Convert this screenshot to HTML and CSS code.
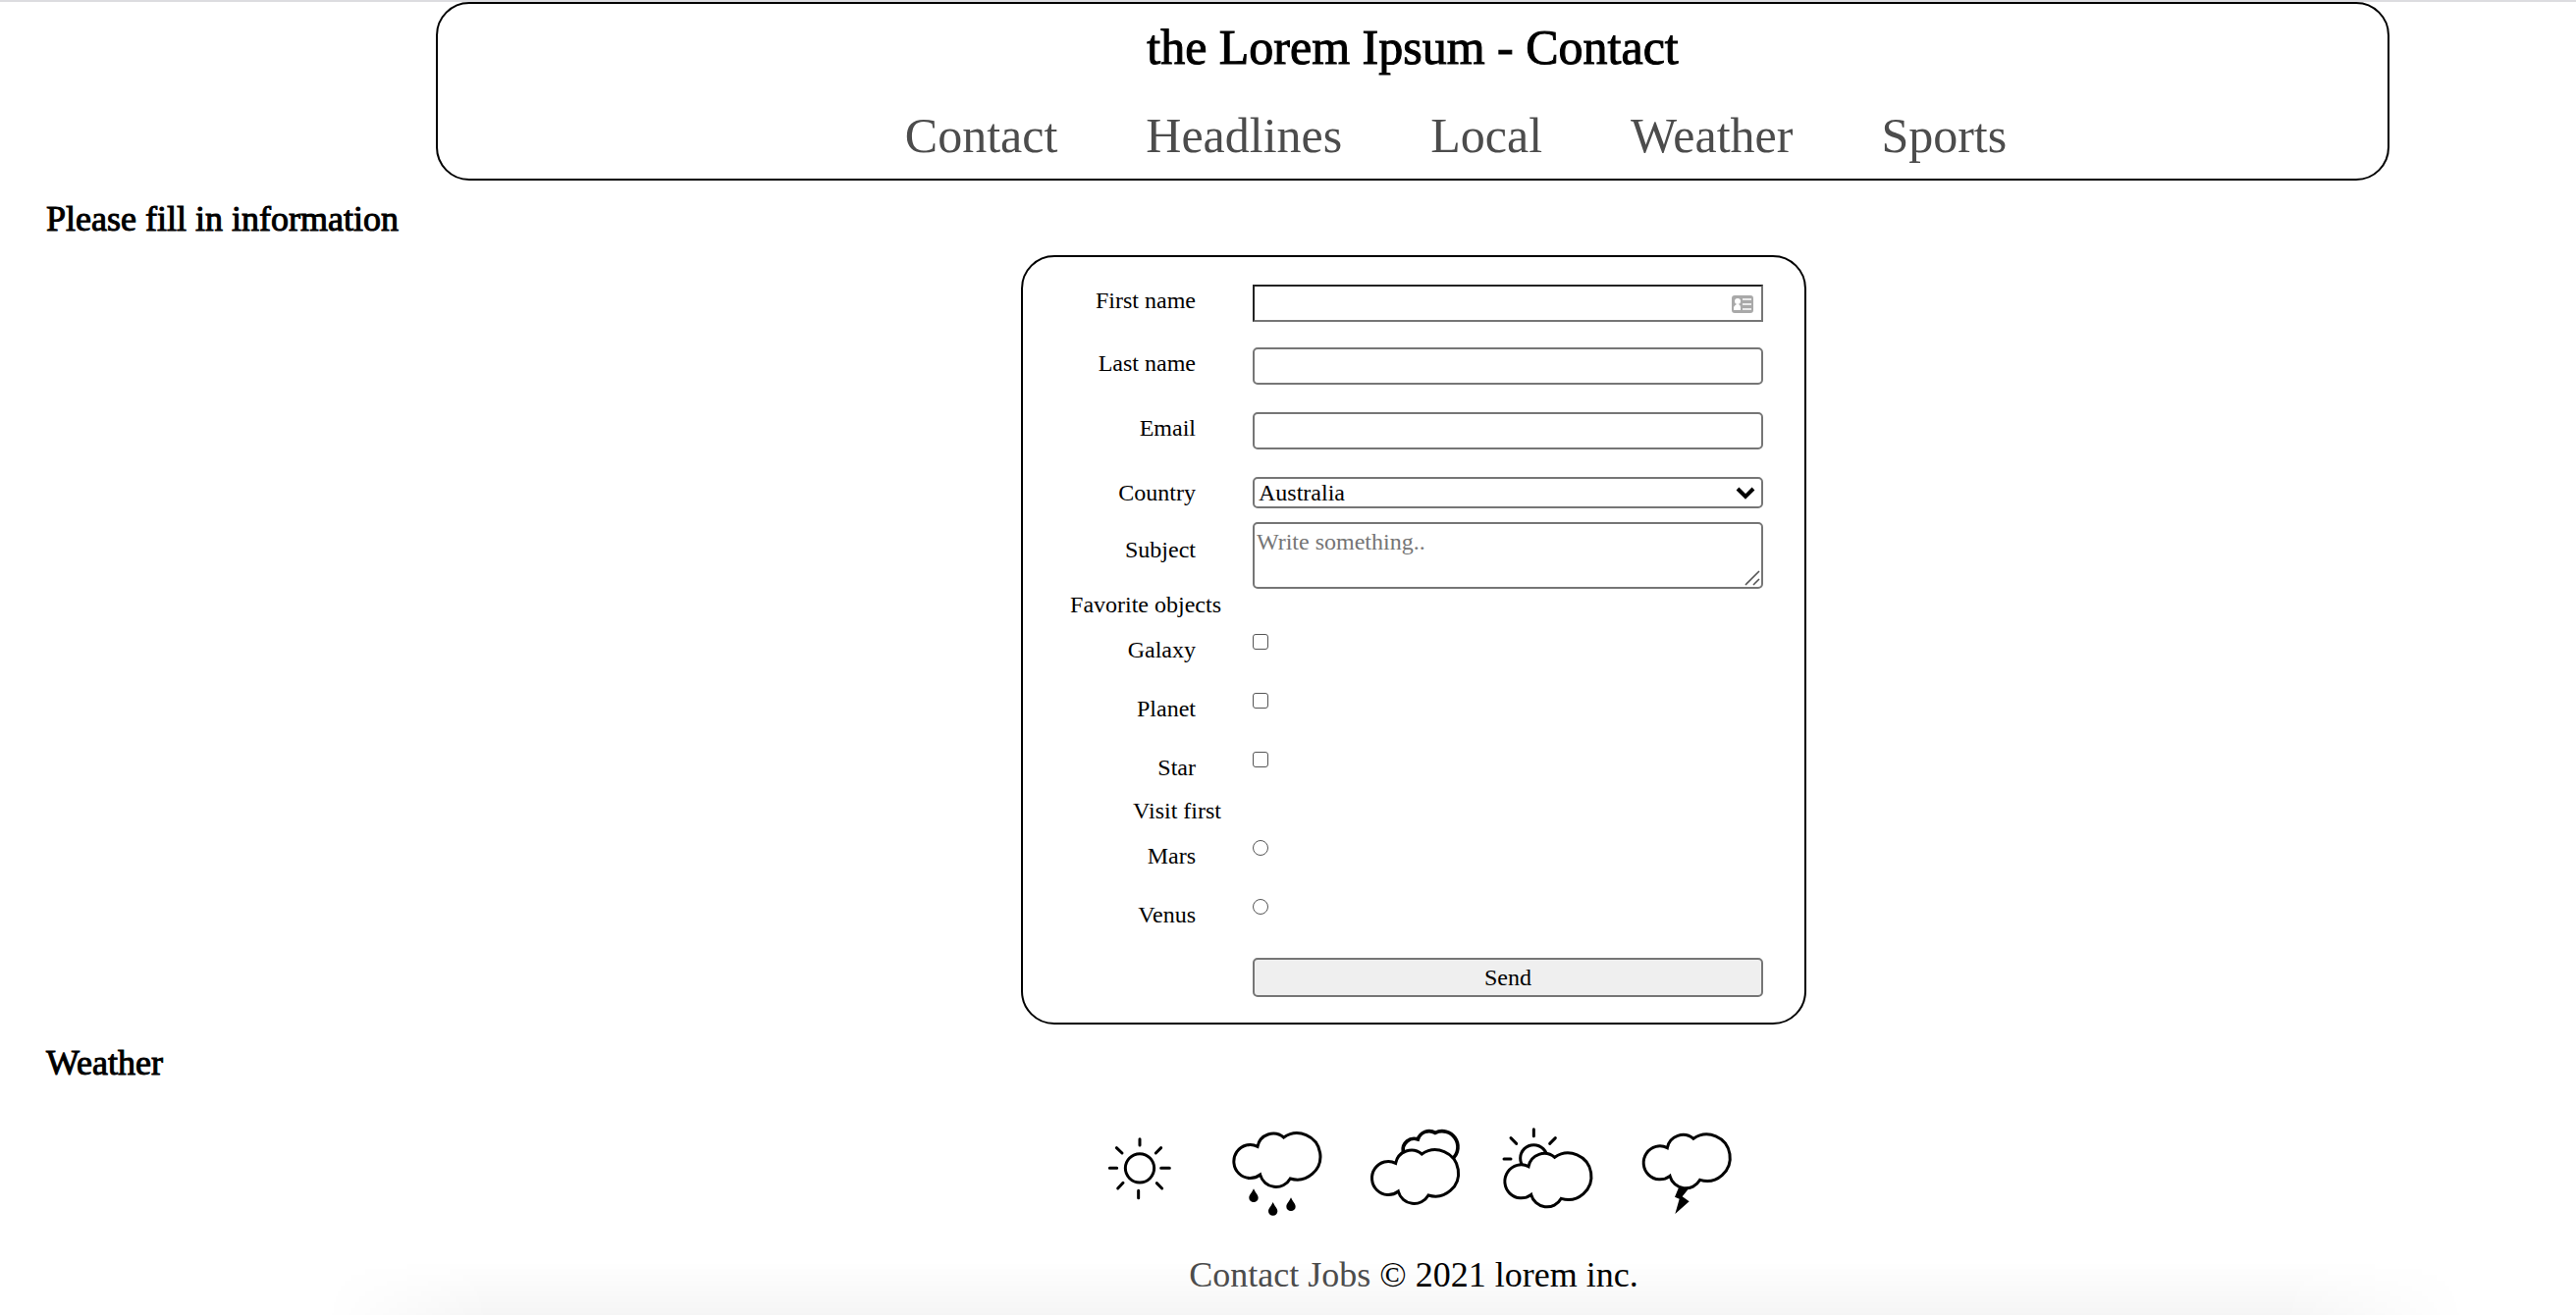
FILE: index.html
```html
<!DOCTYPE html>
<html lang="en">
<head>
<meta charset="utf-8">
<title>the Lorem Ipsum - Contact</title>
<link rel="stylesheet" href="styles.css">
</head>
<body>
<header class="site-header">
  <h1 class="site-title">the Lorem Ipsum - Contact</h1>
  <nav class="site-nav">
    <a href="#contact">Contact</a>
    <a href="#headlines">Headlines</a>
    <a href="#local">Local</a>
    <a href="#weather">Weather</a>
    <a href="#sports">Sports</a>
  </nav>
</header>
<main>
  <h2 class="section-title" id="contact">Please fill in information</h2>
  <div class="centered">
    <form class="contact-form">
      <label for="fname">First name</label>
      <div class="control">
        <input class="box box-inset" type="text" id="fname" name="firstname">
        <svg class="card-icon" viewBox="0 0 22 18" aria-hidden="true">
          <rect width="22" height="18" rx="3" fill="#a9a9a9"/>
          <circle cx="6" cy="6" r="3" fill="#fff"/>
          <path d="M2 15V12Q3 10 5 9H7Q9 10 9 12V15Z" fill="#fff"/>
          <path d="M11 4H20M11 9H20M11 14H20" stroke="#fff" stroke-width="1.6"/>
        </svg>
      </div>
      <label for="lname">Last name</label>
      <input class="box" type="text" id="lname" name="lastname">
      <label for="email">Email</label>
      <input class="box" type="email" id="email" name="email">
      <label for="country">Country</label>
      <div class="control">
        <select class="box box-select" id="country" name="country">
          <option>Australia</option>
          <option>Canada</option>
          <option>USA</option>
        </select>
        <svg class="chevron" viewBox="0 0 20 14" aria-hidden="true">
          <path d="M2 3L10 11L18 3" fill="none" stroke="#000" stroke-width="4"/>
        </svg>
      </div>
      <label class="label-subject" for="subject">Subject</label>
      <div class="control">
        <textarea class="box box-area" id="subject" name="subject" placeholder="Write something.."></textarea>
        <svg class="grip" viewBox="0 0 16 16" aria-hidden="true">
          <path d="M1 15L15 1M9 15L15 9" fill="none" stroke="#555" stroke-width="1.6"/>
        </svg>
      </div>
      <h3 class="group-title">Favorite objects</h3>
      <label for="galaxy">Galaxy</label>
      <input class="tick" type="checkbox" id="galaxy" name="galaxy">
      <label for="planet">Planet</label>
      <input class="tick" type="checkbox" id="planet" name="planet">
      <label for="star">Star</label>
      <input class="tick" type="checkbox" id="star" name="star">
      <h3 class="group-title">Visit first</h3>
      <label for="mars">Mars</label>
      <input class="tick tick-round" type="radio" id="mars" name="visit" value="mars">
      <label for="venus">Venus</label>
      <input class="tick tick-round" type="radio" id="venus" name="visit" value="venus">
      <button class="send" type="submit">Send</button>
    </form>
  </div>
  <h2 class="section-title" id="weather">Weather</h2>
  <div class="centered forecast">
    <svg class="weather-icon" viewBox="-34 0 420 360" role="img" aria-label="Sunny">
      <circle cx="185" cy="178" r="44"/>
      <path d="M185 89V108M114 116L131 132M250 116L234 132M93 178H115M250 178H276M134 223L118 240M237 224L253 240M181 247V269"/>
    </svg>
    <svg class="weather-icon" viewBox="386 0 420 360" role="img" aria-label="Rain">
      <defs>
        <path id="cloud" d="M545 112A49 49 0 0 1 625 84A71 71 0 1 1 645 210A50 50 0 0 1 553 198A50 51 0 1 1 545 112Z"/>
        <path id="drop" class="solid" d="M533 241C539 254 547 261 547 269A14 13 0 0 1 519 269C519 261 527 254 533 241Z"/>
      </defs>
      <use href="#cloud"/>
      <use href="#drop"/>
      <use href="#drop" x="59" y="41"/>
      <use href="#drop" x="114" y="27"/>
    </svg>
    <svg class="weather-icon" viewBox="806 0 420 360" role="img" aria-label="Cloudy">
      <path class="far-cloud" d="M990 128A34 34 0 0 1 1035 90A36 36 0 0 1 1088 70A48 48 0 0 1 1142 148"/>
      <use href="#cloud" x="422" y="51"/>
    </svg>
    <svg class="weather-icon" viewBox="1226 0 420 360" role="img" aria-label="Partly cloudy">
      <circle cx="1389" cy="148" r="41"/>
      <path d="M1389 59V80M1319 86L1336 103M1455 86L1438 103M1298 150H1319"/>
      <use href="#cloud" x="828" y="61"/>
    </svg>
    <svg class="weather-icon" viewBox="1646 0 420 360" role="img" aria-label="Thunderstorm">
      <use href="#cloud" x="1252" y="4"/>
      <path class="solid" d="M1831 240H1863L1843 265L1864 280L1821 318L1834 272L1820 266Z"/>
    </svg>
  </div>
</main>
<footer class="site-footer">
  <p><a href="#contact">Contact</a> <a href="#jobs">Jobs</a> © 2021 lorem inc.</p>
</footer>
</body>
</html>
```
FILE: styles.css
```css
* {
  box-sizing: border-box;
}

body {
  margin: 0;
  min-height: 100vh;
  overflow-x: hidden;
  border-top: 2px solid #dcdce0;
  background: #fff;
  color: #000;
  font-family: "Liberation Serif", serif;
  font-size: 24px;
  line-height: 28px;
}

h1, h2, h3, p {
  margin: 0;
  font-weight: 400;
}

a {
  color: #4c4c4c;
  text-decoration: none;
}

.site-header {
  margin-left: 444px;
  margin-right: 190px;
  padding: 14px 0;
  border: 2px solid #000;
  border-radius: 34px;
  font-size: 50px;
  line-height: 60px;
}

.site-title {
  margin-bottom: 30px;
  font-size: 50px;
  text-align: center;
  -webkit-text-stroke: 1px #000;
}

.site-nav {
  display: flex;
  justify-content: center;
  gap: 90px;
  padding-left: 88px;
}

.section-title {
  margin: 17px 47px 15px;
  font-size: 36px;
  line-height: 44px;
  -webkit-text-stroke: 1px #000;
}

.centered {
  display: flex;
  justify-content: center;
  padding-left: 256px;
}

.contact-form {
  display: grid;
  grid-template-columns: 1fr 520px;
  grid-template-rows: 64px 66px 66px 46px 74px 40px 60px 60px 50px 40px 60px 60px 40px;
  align-items: start;
  width: 800px;
  padding: 28px 42px 26px 0;
  border: 2px solid #000;
  border-radius: 34px;
}

.contact-form label {
  padding: 2px 58px 0 0;
  text-align: right;
}

.contact-form .label-subject {
  padding-top: 14px;
}

.group-title {
  grid-column: 1 / -1;
  padding-right: 552px;
  font-size: 24px;
  line-height: 20px;
  text-align: right;
}

.control {
  position: relative;
}

.box {
  display: block;
  width: 100%;
  height: 38px;
  margin: 0;
  padding: 0 2px;
  border: 2px solid #767676;
  border-radius: 5px;
  background: #fff;
  color: #000;
  font: inherit;
}

.box-inset {
  border-color: #222 #767676 #767676 #222;
  border-radius: 0;
}

.box-select {
  height: 32px;
  padding: 0 4px;
  appearance: none;
}

.box-area {
  height: 68px;
  padding: 4px 2px;
  resize: none;
}

.box-area::placeholder {
  color: #757575;
}

.card-icon {
  position: absolute;
  top: 11px;
  right: 10px;
  width: 22px;
  height: 18px;
}

.chevron {
  position: absolute;
  top: 9px;
  right: 8px;
  width: 20px;
  height: 14px;
  pointer-events: none;
}

.grip {
  position: absolute;
  right: 3px;
  bottom: 3px;
  width: 16px;
  height: 16px;
  pointer-events: none;
}

.tick {
  width: 16px;
  height: 16px;
  margin: 0;
  appearance: none;
  border: 1px solid #555;
  border-radius: 3px;
  background: #fff;
}

.tick-round {
  border-radius: 50%;
}

.tick:checked {
  background: #767676;
}

.send {
  grid-column: 2;
  height: 40px;
  padding: 0;
  border: 2px solid #767676;
  border-radius: 5px;
  background: #efefef;
  color: #000;
  font: inherit;
}

.forecast {
  margin-top: 26px;
  padding-left: 252px;
}

.weather-icon {
  width: 140px;
  height: 120px;
  fill: #fff;
  stroke: #000;
  stroke-width: 9px;
  stroke-linecap: round;
  stroke-linejoin: miter;
}

.weather-icon .far-cloud {
  stroke-width: 11px;
}

.solid {
  fill: #000;
  stroke: none;
}

.site-footer {
  position: relative;
  padding: 26px 0 20px 256px;
  font-size: 36px;
  line-height: 44px;
  text-align: center;
}

/* Soft shade along the bottom edge, behind the footer text. */
.site-footer::after {
  content: "";
  position: absolute;
  z-index: -1;
  right: 0;
  bottom: 0;
  left: 0;
  height: 56px;
  background: linear-gradient(to bottom, transparent, rgba(0, 0, 0, 0.04));
  mask-image: linear-gradient(to right, transparent 330px, #000 500px, #000 calc(100% - 300px), transparent calc(100% - 110px));
}
```
